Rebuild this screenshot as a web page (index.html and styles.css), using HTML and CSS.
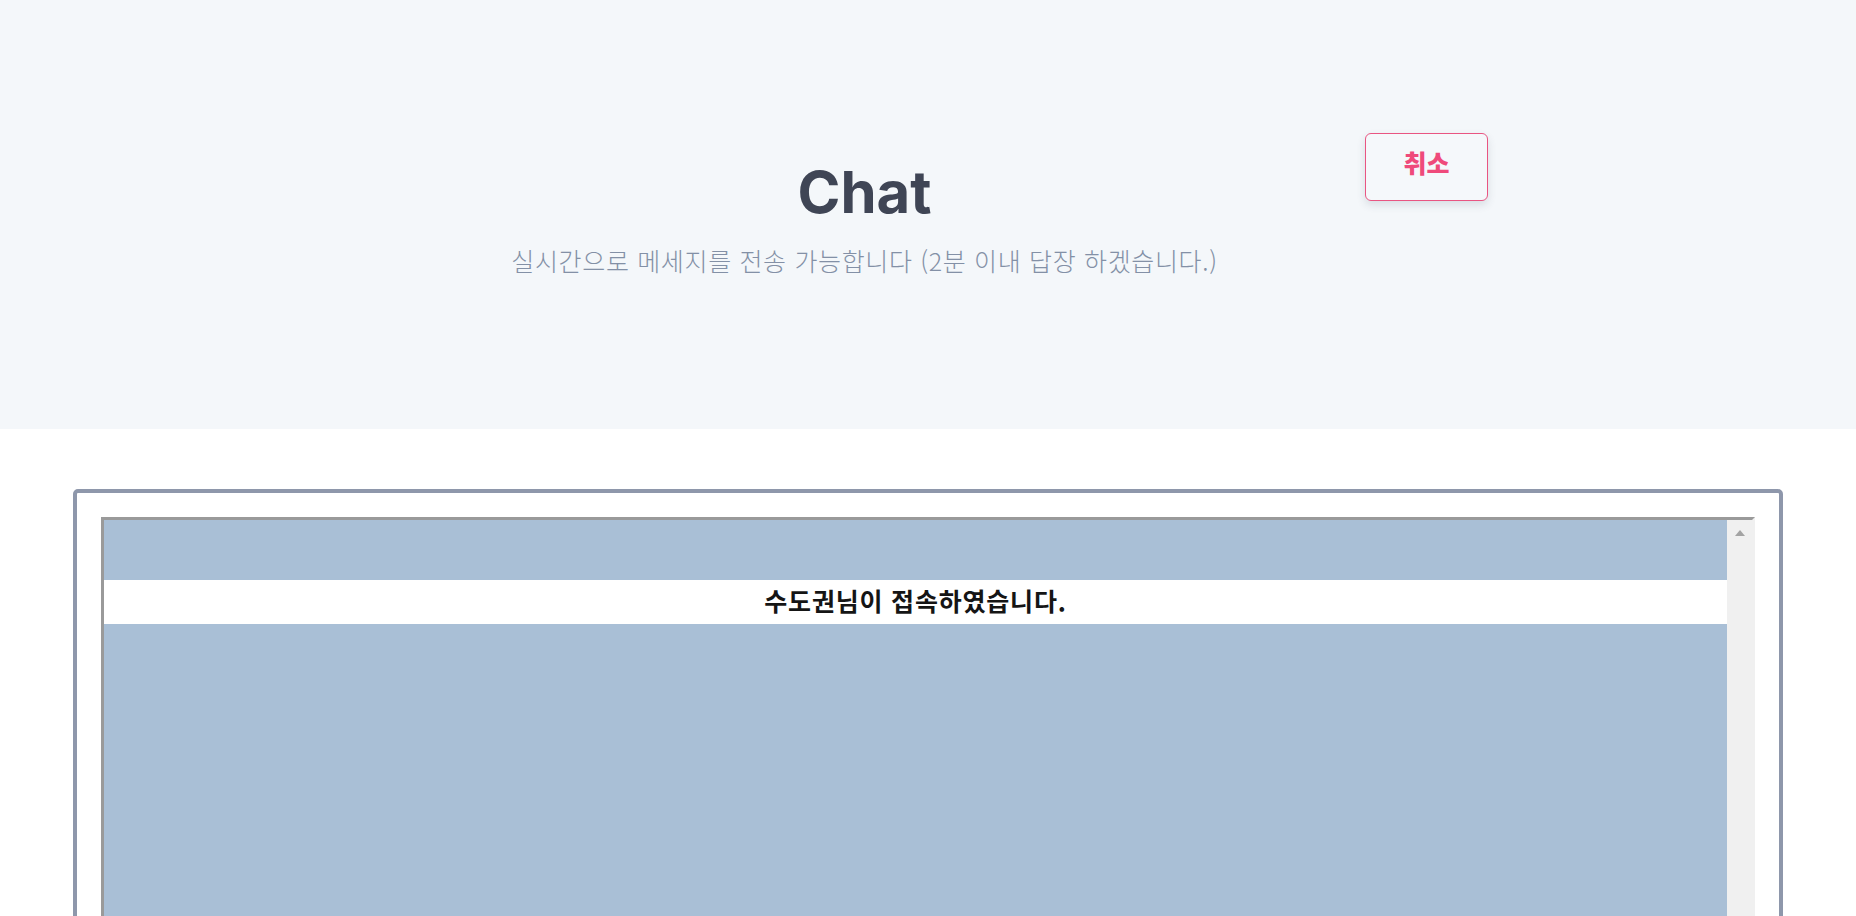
FILE: index.html
```html
<!DOCTYPE html>
<html lang="ko">
<head>
<meta charset="utf-8">
<title>Chat</title>
<link rel="stylesheet" href="styles.css">
</head>
<body>
  <header class="hero">
    <div class="hero-inner">
      <div class="hero-text">
        <h1 class="hero-title">Chat</h1>
        <p class="hero-sub">실시간으로 메세지를 전송 가능합니다 (2분 이내 답장 하겠습니다.)</p>
      </div>
      <button class="cancel-btn" type="button">취소</button>
    </div>
  </header>
  <main class="chat-section">
    <div class="chat-card">
      <div class="chat-frame">
        <div class="chat-log">
          <div class="chat-notice">수도권님이 접속하였습니다.</div>
        </div>
        <div class="scrollbar">
          <span class="scroll-arrow"></span>
        </div>
      </div>
    </div>
  </main>
</body>
</html>
```
FILE: styles.css
```css
html {
  overflow: hidden;
}
body {
  margin: 0;
  background: #ffffff;
  font-family: "Noto Sans CJK KR", "Noto Sans", sans-serif;
}
.hero {
  height: 429px;
  background: #f4f7fa;
  box-sizing: border-box;
  padding-top: 133px;
}
.hero-inner {
  width: 1120px;
  margin: 0 auto;
  display: flex;
  align-items: flex-start;
  gap: 4px;
}
.hero-text {
  flex: 1;
  text-align: center;
  padding-top: 30px;
}
.hero-title {
  margin: 0;
  font-family: "Inter", "Noto Sans", sans-serif;
  font-weight: 700;
  font-size: 58px;
  line-height: 1;
  color: #3f4555;
}
.hero-sub {
  margin: 21px 0 0;
  font-family: "Noto Sans CJK KR", sans-serif;
  font-weight: 300;
  font-size: 25px;
  letter-spacing: 0.65px;
  line-height: 36px;
  color: #8390a6;
}
.cancel-btn {
  width: 123px;
  height: 68px;
  box-sizing: border-box;
  border: 1px solid #e95582;
  border-radius: 6px;
  background: #f5f8fb;
  box-shadow: 0 4px 8px rgba(60, 70, 90, 0.14);
  color: #ef4a7b;
  font-family: "Noto Sans CJK KR", sans-serif;
  font-weight: 900;
  font-size: 25px;
  padding: 0 0 10px;
  cursor: pointer;
}
.chat-section {
  padding: 60px 73px 0;
}
.chat-card {
  border: 4px solid #8e97ab;
  border-radius: 5px;
  padding: 24px;
  height: 600px;
}
.chat-frame {
  display: flex;
  height: 560px;
  border-style: solid;
  border-width: 3px;
  border-color: #9a9a9a #f0f0f0 #f0f0f0 #9a9a9a;
  background: #a9bfd6;
}
.chat-log {
  flex: 1;
  padding-top: 60px;
}
.chat-notice {
  background: #ffffff;
  height: 44px;
  line-height: 40px;
  text-align: center;
  font-weight: 700;
  font-size: 25px;
  letter-spacing: 0.8px;
  color: #151515;
}
.scrollbar {
  width: 25px;
  background: #f0f0f0;
  display: flex;
  justify-content: center;
  padding-top: 10px;
  box-sizing: border-box;
}
.scroll-arrow {
  width: 0;
  height: 0;
  border-left: 5.5px solid transparent;
  border-right: 5.5px solid transparent;
  border-bottom: 6px solid #a3a3a3;
}
```
